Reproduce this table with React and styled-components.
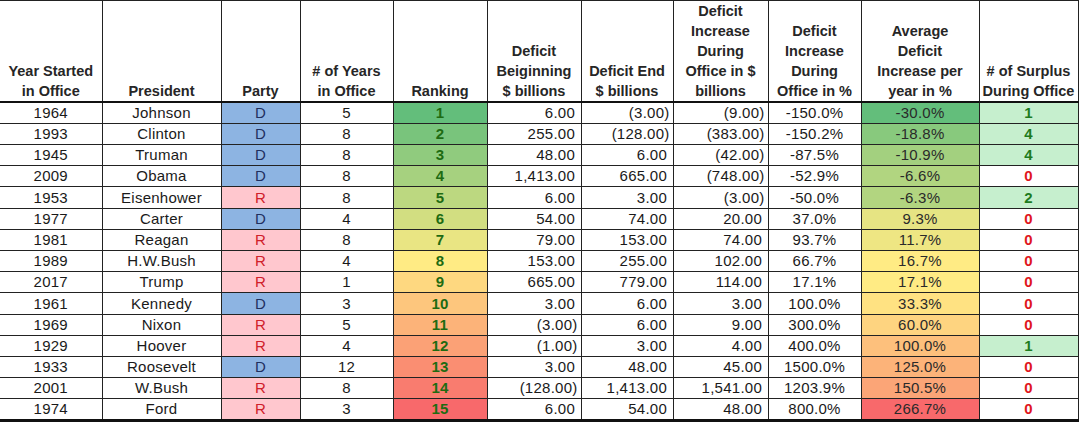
import React from "react";
import styled, { createGlobalStyle } from "styled-components";

const Global = createGlobalStyle`
  html, body { margin: 0; padding: 0; background: #fff; }
  body { font-family: "Liberation Sans", Arial, sans-serif; color: #1a1a1a; }
`;

const GREEN = [99, 190, 123];
const YELLOW = [255, 235, 132];
const RED = [248, 105, 107];

const lerp = (a, b, t) => a.map((v, i) => Math.round(v + (b[i] - v) * t));
const scale = (v, min, mid, max) => {
  const c =
    v <= mid
      ? lerp(GREEN, YELLOW, (v - min) / (mid - min))
      : lerp(YELLOW, RED, (v - mid) / (max - mid));
  return `rgb(${c[0]},${c[1]},${c[2]})`;
};

const rows = [
  ["1964", "Johnson", "D", "5", 1, "6.00", "(3.00)", "(9.00)", "-150.0%", -30.0, 1],
  ["1993", "Clinton", "D", "8", 2, "255.00", "(128.00)", "(383.00)", "-150.2%", -18.8, 4],
  ["1945", "Truman", "D", "8", 3, "48.00", "6.00", "(42.00)", "-87.5%", -10.9, 4],
  ["2009", "Obama", "D", "8", 4, "1,413.00", "665.00", "(748.00)", "-52.9%", -6.6, 0],
  ["1953", "Eisenhower", "R", "8", 5, "6.00", "3.00", "(3.00)", "-50.0%", -6.3, 2],
  ["1977", "Carter", "D", "4", 6, "54.00", "74.00", "20.00", "37.0%", 9.3, 0],
  ["1981", "Reagan", "R", "8", 7, "79.00", "153.00", "74.00", "93.7%", 11.7, 0],
  ["1989", "H.W.Bush", "R", "4", 8, "153.00", "255.00", "102.00", "66.7%", 16.7, 0],
  ["2017", "Trump", "R", "1", 9, "665.00", "779.00", "114.00", "17.1%", 17.1, 0],
  ["1961", "Kennedy", "D", "3", 10, "3.00", "6.00", "3.00", "100.0%", 33.3, 0],
  ["1969", "Nixon", "R", "5", 11, "(3.00)", "6.00", "9.00", "300.0%", 60.0, 0],
  ["1929", "Hoover", "R", "4", 12, "(1.00)", "3.00", "4.00", "400.0%", 100.0, 1],
  ["1933", "Roosevelt", "D", "12", 13, "3.00", "48.00", "45.00", "1500.0%", 125.0, 0],
  ["2001", "W.Bush", "R", "8", 14, "(128.00)", "1,413.00", "1,541.00", "1203.9%", 150.5, 0],
  ["1974", "Ford", "R", "3", 15, "6.00", "54.00", "48.00", "800.0%", 266.7, 0],
];

const widths = [102, 119, 79, 93, 94, 94, 92, 95, 93, 118, 99];

const headers = [
  ["Year Started", "in Office"],
  ["President"],
  ["Party"],
  ["# of Years", "in Office"],
  ["Ranking"],
  ["Deficit", "Beiginning", "$ billions"],
  ["Deficit End", "$ billions"],
  ["Deficit", "Increase", "During", "Office in $", "billions"],
  ["Deficit", "Increase", "During", "Office in %"],
  ["Average", "Deficit", "Increase per", "year in %"],
  ["# of Surplus", "During Office"],
];

const Sheet = styled.table`
  border-collapse: collapse;
  table-layout: fixed;
  width: 1078px;
  border-top: 1px solid #222;
  border-bottom: 3px solid #111;
`;

const HeadRow = styled.tr`
  height: 100px;
  border-bottom: 2px solid #111;
`;

const HeadCell = styled.th`
  padding: 0 1px;
  vertical-align: bottom;
  text-align: center;
  font-weight: bold;
  font-size: 14.5px;
  line-height: 20px;
  color: #262626;
  white-space: nowrap;
  border-right: 1px solid #222;
  border-left: 1px solid #222;
  &:first-child { border-left: none; }
`;

const Row = styled.tr`
  height: 21px;
  border-top: 1px solid #222;
  &:nth-child(5n) { height: 22px; }
`;

const Cell = styled.td`
  padding: 0 ${(p) => (p.$align === "right" ? (p.$paren ? "3px" : "5.5px") : "2px")} 0 2px;
  font-size: 15px;
  letter-spacing: 0.25px;
  line-height: 20px;
  text-align: ${(p) => p.$align || "center"};
  font-weight: ${(p) => (p.$bold ? "bold" : "normal")};
  color: ${(p) => p.$color || "#1a1a1a"};
  background: ${(p) => p.$bg || "transparent"};
  border-left: 1px solid #222;
  border-right: 1px solid #222;
  white-space: nowrap;
  overflow: hidden;
  &:first-child { border-left: none; }
`;

const PARTY = {
  D: { bg: "#8DB4E2", color: "#1F2F5F" },
  R: { bg: "#FFC7CE", color: "#D0202A" },
};

const Money = ({ value }) => (
  <Cell $align="right" $paren={value.startsWith("(")}>
    {value}
  </Cell>
);

export default function App() {
  const avgs = rows.map((r) => r[9]);
  const sorted = [...avgs].sort((a, b) => a - b);
  const aMin = sorted[0];
  const aMid = sorted[Math.floor(sorted.length / 2)];
  const aMax = sorted[sorted.length - 1];

  return (
    <>
      <Global />
      <Sheet>
        <colgroup>
          {widths.map((w, i) => (
            <col key={i} style={{ width: w }} />
          ))}
        </colgroup>
        <thead>
          <HeadRow>
            {headers.map((lines, i) => (
              <HeadCell key={i}>
                {lines.map((l, j) => (
                  <React.Fragment key={j}>
                    {j > 0 && <br />}
                    {l}
                  </React.Fragment>
                ))}
              </HeadCell>
            ))}
          </HeadRow>
        </thead>
        <tbody>
          {rows.map((r) => (
            <Row key={r[1]}>
              <Cell>{r[0]}</Cell>
              <Cell>{r[1]}</Cell>
              <Cell $bg={PARTY[r[2]].bg} $color={PARTY[r[2]].color}>
                {r[2]}
              </Cell>
              <Cell>{r[3]}</Cell>
              <Cell $bold $color="#1E6B12" $bg={scale(r[4], 1, 8, 15)}>
                {r[4]}
              </Cell>
              <Money value={r[5]} />
              <Money value={r[6]} />
              <Money value={r[7]} />
              <Cell>{r[8]}</Cell>
              <Cell $color="#2a2a2a" $bg={scale(r[9], aMin, aMid, aMax)}>
                {r[9].toFixed(1)}%
              </Cell>
              <Cell
                $bold
                $color={r[10] > 0 ? "#1E7B1E" : "#E0161C"}
                $bg={r[10] > 0 ? "#C6EFCE" : undefined}
              >
                {r[10]}
              </Cell>
            </Row>
          ))}
        </tbody>
      </Sheet>
    </>
  );
}
